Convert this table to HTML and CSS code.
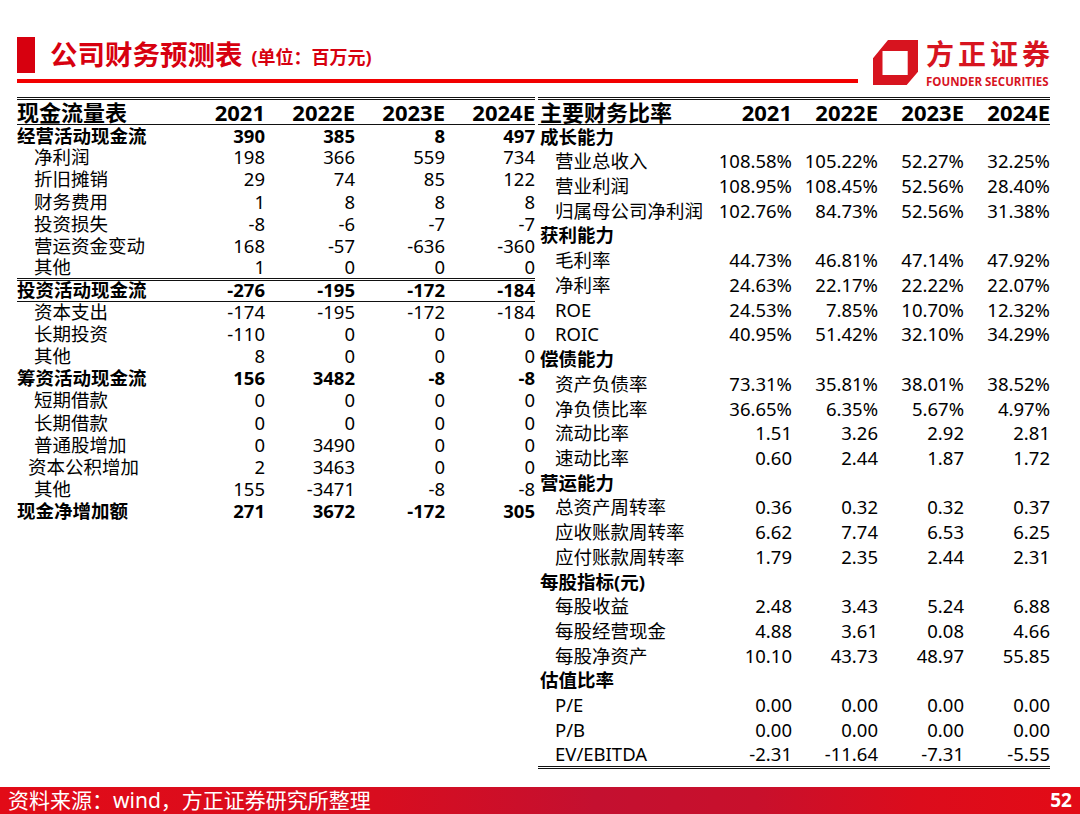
FILE: index.html
```html
<!DOCTYPE html>
<html lang="zh">
<head>
<meta charset="utf-8">
<link rel="stylesheet" href="styles.css">
</head>
<body>
<header class="header">
  <div class="title-area">
    <div class="title-row">
      <div class="title-bar"></div>
      <span class="title">公司财务预测表</span>
      <span class="unit">(单位：百万元)</span>
    </div>
    <div class="rule"></div>
  </div>
  <div class="logo">
    <svg class="logo-icon" width="45" height="45" viewBox="0 0 45 45">
      <path fill="#d7141f" fill-rule="evenodd" d="M15 0 L45 0 L45 31.7 L33.7 45 L0 45 L0 18.3 Z M9.5 11 L34.7 11 L34.7 35 L9.5 35 Z"/>
    </svg>
    <div class="logo-text">
      <div class="logo-cn">方正证券</div>
      <div class="logo-en">FOUNDER SECURITIES</div>
    </div>
  </div>
</header>

<main class="main">
  <table class="cf">
    <colgroup><col class="c-label"><col><col><col><col></colgroup>
    <thead>
      <tr><th>现金流量表</th><th>2021</th><th>2022E</th><th>2023E</th><th>2024E</th></tr>
    </thead>
    <tbody>
      <tr class="b"><td>经营活动现金流</td><td>390</td><td>385</td><td>8</td><td>497</td></tr>
      <tr class="sub"><td>净利润</td><td>198</td><td>366</td><td>559</td><td>734</td></tr>
      <tr class="sub"><td>折旧摊销</td><td>29</td><td>74</td><td>85</td><td>122</td></tr>
      <tr class="sub"><td>财务费用</td><td>1</td><td>8</td><td>8</td><td>8</td></tr>
      <tr class="sub"><td>投资损失</td><td>-8</td><td>-6</td><td>-7</td><td>-7</td></tr>
      <tr class="sub"><td>营运资金变动</td><td>168</td><td>-57</td><td>-636</td><td>-360</td></tr>
      <tr class="sub"><td>其他</td><td>1</td><td>0</td><td>0</td><td>0</td></tr>
      <tr class="b ruled"><td>投资活动现金流</td><td>-276</td><td>-195</td><td>-172</td><td>-184</td></tr>
      <tr class="sub"><td>资本支出</td><td>-174</td><td>-195</td><td>-172</td><td>-184</td></tr>
      <tr class="sub"><td>长期投资</td><td>-110</td><td>0</td><td>0</td><td>0</td></tr>
      <tr class="sub"><td>其他</td><td>8</td><td>0</td><td>0</td><td>0</td></tr>
      <tr class="b"><td>筹资活动现金流</td><td>156</td><td>3482</td><td>-8</td><td>-8</td></tr>
      <tr class="sub"><td>短期借款</td><td>0</td><td>0</td><td>0</td><td>0</td></tr>
      <tr class="sub"><td>长期借款</td><td>0</td><td>0</td><td>0</td><td>0</td></tr>
      <tr class="sub"><td>普通股增加</td><td>0</td><td>3490</td><td>0</td><td>0</td></tr>
      <tr class="sub2"><td>资本公积增加</td><td>2</td><td>3463</td><td>0</td><td>0</td></tr>
      <tr class="sub"><td>其他</td><td>155</td><td>-3471</td><td>-8</td><td>-8</td></tr>
      <tr class="b"><td>现金净增加额</td><td>271</td><td>3672</td><td>-172</td><td>305</td></tr>
    </tbody>
  </table>

  <table class="ratio">
    <colgroup><col class="r-label"><col><col><col><col></colgroup>
    <thead>
      <tr><th>主要财务比率</th><th>2021</th><th>2022E</th><th>2023E</th><th>2024E</th></tr>
    </thead>
    <tbody>
      <tr class="b"><td>成长能力</td><td></td><td></td><td></td><td></td></tr>
      <tr class="sub"><td>营业总收入</td><td>108.58%</td><td>105.22%</td><td>52.27%</td><td>32.25%</td></tr>
      <tr class="sub"><td>营业利润</td><td>108.95%</td><td>108.45%</td><td>52.56%</td><td>28.40%</td></tr>
      <tr class="sub"><td>归属母公司净利润</td><td>102.76%</td><td>84.73%</td><td>52.56%</td><td>31.38%</td></tr>
      <tr class="b"><td>获利能力</td><td></td><td></td><td></td><td></td></tr>
      <tr class="sub"><td>毛利率</td><td>44.73%</td><td>46.81%</td><td>47.14%</td><td>47.92%</td></tr>
      <tr class="sub"><td>净利率</td><td>24.63%</td><td>22.17%</td><td>22.22%</td><td>22.07%</td></tr>
      <tr class="sub"><td>ROE</td><td>24.53%</td><td>7.85%</td><td>10.70%</td><td>12.32%</td></tr>
      <tr class="sub"><td>ROIC</td><td>40.95%</td><td>51.42%</td><td>32.10%</td><td>34.29%</td></tr>
      <tr class="b"><td>偿债能力</td><td></td><td></td><td></td><td></td></tr>
      <tr class="sub"><td>资产负债率</td><td>73.31%</td><td>35.81%</td><td>38.01%</td><td>38.52%</td></tr>
      <tr class="sub"><td>净负债比率</td><td>36.65%</td><td>6.35%</td><td>5.67%</td><td>4.97%</td></tr>
      <tr class="sub"><td>流动比率</td><td>1.51</td><td>3.26</td><td>2.92</td><td>2.81</td></tr>
      <tr class="sub"><td>速动比率</td><td>0.60</td><td>2.44</td><td>1.87</td><td>1.72</td></tr>
      <tr class="b"><td>营运能力</td><td></td><td></td><td></td><td></td></tr>
      <tr class="sub"><td>总资产周转率</td><td>0.36</td><td>0.32</td><td>0.32</td><td>0.37</td></tr>
      <tr class="sub"><td>应收账款周转率</td><td>6.62</td><td>7.74</td><td>6.53</td><td>6.25</td></tr>
      <tr class="sub"><td>应付账款周转率</td><td>1.79</td><td>2.35</td><td>2.44</td><td>2.31</td></tr>
      <tr class="b"><td>每股指标(元)</td><td></td><td></td><td></td><td></td></tr>
      <tr class="sub"><td>每股收益</td><td>2.48</td><td>3.43</td><td>5.24</td><td>6.88</td></tr>
      <tr class="sub"><td>每股经营现金</td><td>4.88</td><td>3.61</td><td>0.08</td><td>4.66</td></tr>
      <tr class="sub"><td>每股净资产</td><td>10.10</td><td>43.73</td><td>48.97</td><td>55.85</td></tr>
      <tr class="b"><td>估值比率</td><td></td><td></td><td></td><td></td></tr>
      <tr class="sub"><td>P/E</td><td>0.00</td><td>0.00</td><td>0.00</td><td>0.00</td></tr>
      <tr class="sub"><td>P/B</td><td>0.00</td><td>0.00</td><td>0.00</td><td>0.00</td></tr>
      <tr class="sub last"><td>EV/EBITDA</td><td>-2.31</td><td>-11.64</td><td>-7.31</td><td>-5.55</td></tr>
    </tbody>
  </table>
</main>

<footer class="footer">
  <span class="source">资料来源：wind，方正证券研究所整理</span>
  <span class="page">52</span>
</footer>
</body>
</html>
```

FILE: styles.css
```css
html, body {
  margin: 0;
  padding: 0;
}

body {
  width: 1080px;
  height: 814px;
  overflow: hidden;
  background: #fff;
  color: #000;
  font-family: "Noto Sans", "Noto Sans CJK SC", sans-serif;
  display: flex;
  flex-direction: column;
}

/* ---------- header ---------- */
.header {
  display: flex;
  height: 97px;
  padding-left: 17px;
  box-sizing: border-box;
  flex-shrink: 0;
}

.title-area {
  width: 841px;
  padding-top: 37px;
}

.title-row {
  display: flex;
  align-items: center;
  height: 36px;
}

.title-bar {
  width: 18px;
  height: 36px;
  background: #d7000f;
}

.title {
  margin-left: 15px;
  font-size: 27.5px;
  font-weight: 700;
  color: #d7000f;
  line-height: 1;
}

.unit {
  margin-left: 9px;
  margin-top: 4px;
  font-size: 18px;
  font-weight: 700;
  color: #d7000f;
  line-height: 1;
}

.rule {
  height: 4px;
  margin-top: 6px;
  background: #f20000;
}

.logo {
  display: flex;
  margin-left: 15px;
  padding-top: 40px;
  gap: 8px;
}

.logo-icon {
  display: block;
}

.logo-text {
  display: flex;
  flex-direction: column;
  color: #d7141f;
}

.logo-cn {
  font-size: 28px;
  font-weight: 700;
  letter-spacing: 4px;
  line-height: 28px;
  white-space: nowrap;
}

.logo-en {
  font-family: "Open Sans", "Noto Sans", sans-serif;
  font-size: 11.5px;
  font-weight: 700;
  line-height: 12px;
  margin-top: 8px;
  white-space: nowrap;
}

/* ---------- tables ---------- */
.main {
  display: flex;
  align-items: flex-start;
  gap: 3px;
  padding-left: 17px;
}

table {
  border-collapse: collapse;
  table-layout: fixed;
}

.cf {
  width: 518px;
}

.ratio {
  width: 512px;
}

.c-label {
  width: 158px;
}

.r-label {
  width: 168px;
}

th, td {
  padding: 0;
  white-space: nowrap;
  text-align: right;
  line-height: 1;
}

th:first-child, td:first-child {
  text-align: left;
}

thead th {
  font-size: 22px;
  font-weight: 700;
  height: 24px;
  border-top: 3px double #111;
  border-bottom: 1px solid #111;
}

.ratio thead th:first-child {
  padding-left: 2px;
}

tbody td {
  font-size: 18.5px;
  font-weight: 400;
}

.cf tbody tr {
  height: 22.1px;
}

.ratio tbody tr {
  height: 24.72px;
}

tr.b td {
  font-weight: 700;
}

.ratio tr.b td:first-child {
  padding-left: 2px;
}

tr.sub td:first-child {
  padding-left: 17px;
}

tr.sub2 td:first-child {
  padding-left: 11px;
}

tr.ruled td {
  border-top: 3px double #111;
  border-bottom: 1px solid #111;
}

tr.last td {
  border-bottom: 3px double #111;
}

/* ---------- footer ---------- */
.footer {
  margin-top: auto;
  height: 27px;
  flex-shrink: 0;
  display: flex;
  align-items: center;
  justify-content: space-between;
  padding: 0 8px;
  color: #fff;
  background: linear-gradient(90deg, #e20b17 0%, #d80d1f 35%, #c41030 55%, #c8102c 70%, #dc0c1c 85%, #e30b16 100%);
}

.source {
  font-size: 21px;
  line-height: 1;
}

.page {
  font-size: 19px;
  font-weight: 700;
  line-height: 1;
}
```
